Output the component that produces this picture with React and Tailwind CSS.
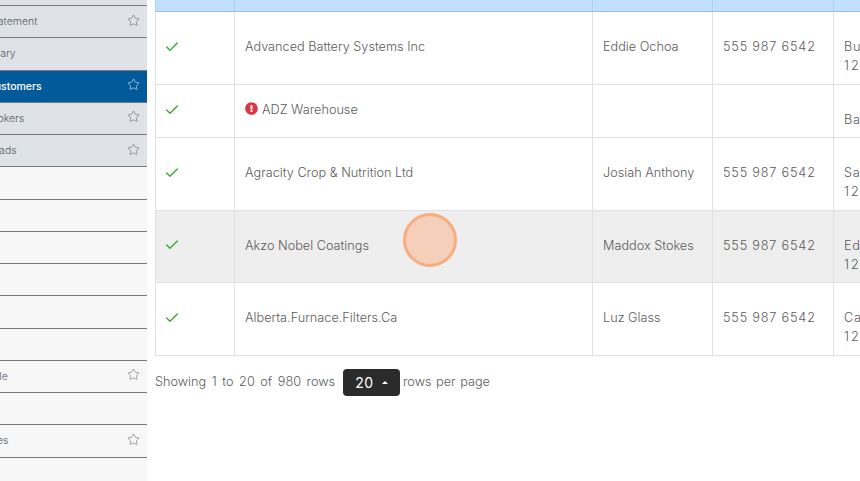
import React from "react";
import { Check, Star } from "lucide-react";
import { FaExclamationCircle } from "react-icons/fa";

const menu = [
  { label: "Statement", cls: "-ml-[12px]", tone: "gray", star: true },
  { label: "Summary", cls: "-ml-[31px]", tone: "gray" },
  { label: "Customers", cls: "-ml-[13px]", tone: "active", star: true },
  { label: "Brokers", cls: "-ml-[13px]", tone: "gray", star: true },
  { label: "Leads", cls: "-ml-[13px]", tone: "gray", star: true },
  { tone: "light" },
  { tone: "light" },
  { tone: "light" },
  { tone: "light" },
  { tone: "light" },
  { tone: "light" },
  { label: "Schedule", cls: "-ml-[38px]", tone: "light", star: true },
  { tone: "light" },
  { label: "Invoices", cls: "-ml-[32px]", tone: "light", star: true },
];

const rows = [
  { name: "Advanced Battery Systems Inc", contact: "Eddie Ochoa", phone: "555 987 6542", city: "Burnaby", zip: "123 456", h: "h-[73px]" },
  { name: "ADZ Warehouse", warn: true, city: "Barrie", h: "h-[53px]" },
  { name: "Agracity Crop & Nutrition Ltd", contact: "Josiah Anthony", phone: "555 987 6542", city: "Saskatoon", zip: "123 456", h: "h-[73px]" },
  { name: "Akzo Nobel Coatings", contact: "Maddox Stokes", phone: "555 987 6542", city: "Edmonton", zip: "123 456", hover: true, h: "h-[72px]" },
  { name: "Alberta.Furnace.Filters.Ca", contact: "Luz Glass", phone: "555 987 6542", city: "Calgary", zip: "123 456", h: "h-[73px]" },
];

function MenuRow({ item }) {
  const tones = {
    gray: "bg-[#dfe2e6] text-[#555b61]",
    active: "bg-[#035a9b] text-white font-medium",
    light: "bg-[#f7f7f7] text-[#555b61]",
  };
  return (
    <div className={`flex h-[32.25px] items-center justify-between border-b border-[#77797c] pr-[7px] text-[10.5px] ${tones[item.tone]}`}>
      <span className={item.cls}>{item.label}</span>
      {item.star && <Star size={13} strokeWidth={1} className="mb-[3px]" />}
    </div>
  );
}

export default function App() {
  const cell = "border border-[#dfe1e5] px-[10px] py-0 align-middle";
  return (
    <div className="flex h-[481px] w-[860px] overflow-hidden bg-white font-['Inter',sans-serif] text-[12.7px] font-light leading-[19px] text-[#5c5c5c]">
      <aside className="w-[147px] shrink-0 overflow-hidden bg-[#f7f7f7]">
        <div className="h-[6px] border-b border-[#77797c] bg-[#dfe2e6]" />
        {menu.map((item, i) => (
          <MenuRow key={i} item={item} />
        ))}
      </aside>

      <main className="min-w-0 flex-1 overflow-hidden pl-2">
        <table className="w-[900px] table-fixed border-collapse">
          <colgroup>
            <col className="w-[79px]" />
            <col className="w-[358px]" />
            <col className="w-[120px]" />
            <col className="w-[121px]" />
            <col className="w-[222px]" />
          </colgroup>
          <thead>
            <tr className="h-[11px] bg-[#c2e0fb]">
              {[0, 1, 2, 3, 4].map((i) => (
                <th key={i} className="border-x border-b border-x-[#a9d2f5] border-b-[#8fc1ee] p-0" />
              ))}
            </tr>
          </thead>
          <tbody>
            {rows.map((row) => (
              <tr key={row.name} className={`${row.h} ${row.hover ? "bg-[#eee]" : ""}`}>
                <td className={cell}>
                  <Check size={16} strokeWidth={2} className="-ml-[2px] -mt-[2px] text-[#3aa838]" />
                </td>
                <td className={cell}>
                  <div className="-mt-[2px]">
                    {row.warn && <FaExclamationCircle size={13} className="mr-1 inline-block align-[-1px] text-[#dc3545]" />}
                    {row.name}
                  </div>
                </td>
                <td className={cell}>
                  <div className="-mt-[2px]">{row.contact}</div>
                </td>
                <td className={cell}>
                  <div className="-mt-[2px] tracking-[0.8px]">{row.phone}</div>
                </td>
                <td className={cell}>
                  <div className="-mt-[2px] tracking-[0.8px]">
                    <br />
                    {row.city}
                    {row.zip && <br />}
                    {row.zip && <span className="tracking-[2px]">{row.zip}</span>}
                  </div>
                </td>
              </tr>
            ))}
          </tbody>
        </table>

        <div className="mt-[13px] flex items-center">
          <span className="-mt-[1px] w-[179px] whitespace-nowrap [word-spacing:2px]">Showing 1 to 20 of 980 rows</span>
          <button className="ml-[9px] flex h-[27px] w-[57px] items-center justify-center gap-[8px] rounded bg-[#2b2b2b] text-[14px] font-normal tracking-[0.5px] text-white">
            20
            <span className="h-0 w-0 border-x-[3px] border-b-[3px] border-x-transparent border-b-white" />
          </button>
          <span className="-mt-[1px] ml-[3px] [word-spacing:1px]">rows per page</span>
        </div>
      </main>

      <div className="absolute left-[403px] top-[213px] h-[54px] w-[54px] rounded-full border-[3px] border-[#f8ad7f] bg-[#f5cfb9]" />
    </div>
  );
}
